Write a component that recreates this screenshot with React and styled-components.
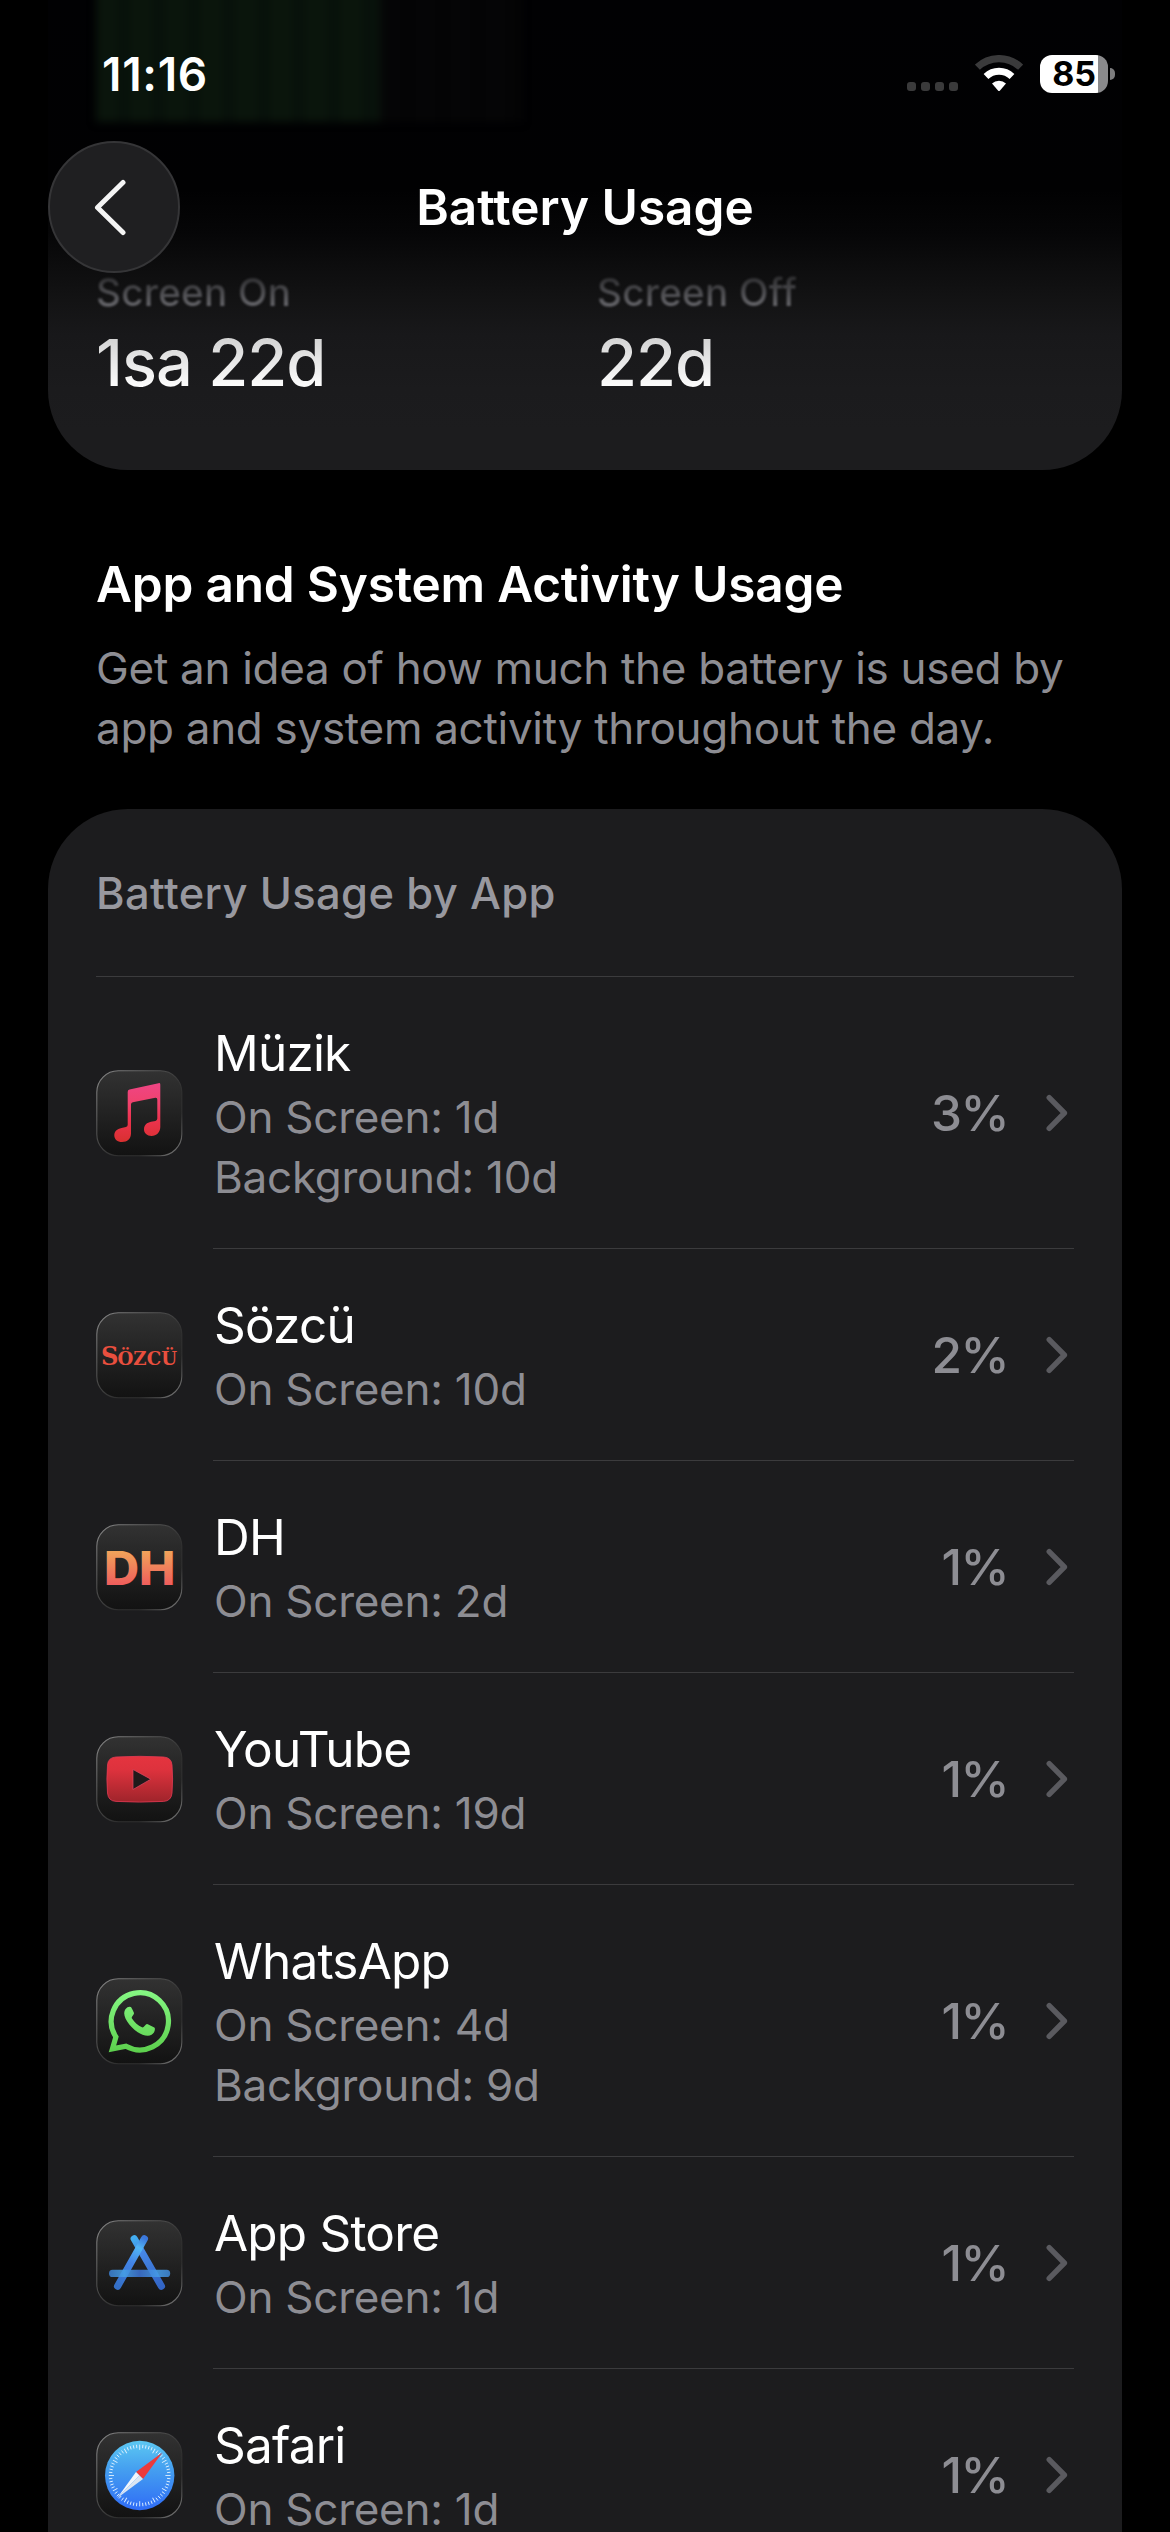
import React from "react";
import styled, { createGlobalStyle } from "styled-components";

const GlobalStyle = createGlobalStyle`
    *{
        box-sizing: border-box;
    }
    body{
        margin: 0;
        background: #000;
        font-family: Inter, "Liberation Sans", sans-serif;
        color: #fff;
    }
    p, h1, h2, h3, ul{
        margin: 0;
        padding: 0;
    }
`;

const Screen = styled.div`
    position: relative;
    width: 1170px;
    height: 2532px;
    overflow: hidden;
    background: #000;
`;

const Header = styled.header`
    position: absolute;
    top: 0;
    left: 0;
    width: 100%;
    z-index: 1;
`;

const StatusBar = styled.div`
    display: flex;
    justify-content: space-between;
    height: 141px;
    padding: 44px 55px 0 102px;
`;

const Time = styled.p`
    font-size: 46px;
    font-weight: 600;
    line-height: 60px;
    letter-spacing: 0.7px;
`;

const StatusIcons = styled.div`
    display: flex;
    align-items: flex-end;
    height: 49px;
`;

const SignalDots = styled.div`
    display: flex;
    gap: 5px;
    margin: 0 17px 2px 0;
    span{
        width: 9px;
        height: 9px;
        border-radius: 3px;
        background: #3a3a3b;
    }
`;

const WifiIcon = styled.svg`
    width: 48px;
    height: 37px;
    margin: 0 17px 1px 0;
`;

const Battery = styled.div`
    display: flex;
    align-items: center;
    gap: 2px;
`;

const BatteryBody = styled.div`
    width: 68px;
    height: 38px;
    border-radius: 12px;
    background: linear-gradient(90deg, #fff ${ props => props.$level }%, #8a8a8c ${ props => props.$level }%);
    color: #000;
    font-size: 34px;
    font-weight: 700;
    line-height: 38px;
    letter-spacing: -0.2px;
    text-align: center;
`;

const BatteryCap = styled.span`
    width: 5px;
    height: 12px;
    border-radius: 0 6px 6px 0;
    background: #7c7c7e;
`;

const NavBar = styled.div`
    display: grid;
    grid-template-columns: 132px 1fr 132px;
    align-items: center;
    height: 132px;
    padding: 0 48px;
`;

const BackButton = styled.button`
    display: flex;
    align-items: center;
    justify-content: center;
    width: 132px;
    height: 132px;
    padding: 0 5px 0 0;
    border: 2px solid #353537;
    border-radius: 50%;
    background: #1f1f21;
`;

const NavTitle = styled.h1`
    font-size: 49.5px;
    font-weight: 600;
    line-height: 60px;
    letter-spacing: 0;
    text-align: center;
`;

const SummaryCard = styled.section`
    display: flex;
    flex-direction: column;
    width: 1074px;
    height: 470px;
    margin: 0 auto;
    border-radius: 0 0 80px 80px;
    background: linear-gradient(#010103 0, #010102 190px, #060607 233px, #0c0c0d 262px, #131314 300px, #18181a 335px, #1b1b1d 390px, #1c1c1e 430px);
`;

const ChartStrip = styled.div`
    display: flex;
    height: 134px;
    margin: -12px 0 0 48px;
    filter: blur(4px);
`;

const ChartBar = styled.div`
    flex: none;
    width: ${ props => props.$width }px;
    background: repeating-linear-gradient(90deg, ${ props => props.$from } 0 20px, ${ props => props.$to } 26px 30px, ${ props => props.$from } 35px);
`;

const Totals = styled.div`
    display: grid;
    grid-template-columns: 501px 1fr;
    padding: 146px 48px 0;
`;

const TotalLabel = styled.p`
    font-size: 38.5px;
    font-weight: 500;
    line-height: 48px;
    letter-spacing: 0.3px;
    background: linear-gradient(#303032 20%, #6c6c71 85%);
    background-clip: text;
    color: transparent;
    filter: blur(1px);
`;

const TotalValue = styled.p`
    margin-top: 9px;
    font-size: 65px;
    font-weight: 500;
    line-height: 76px;
    letter-spacing: -1px;
    background: linear-gradient(#cfcfcf 10%, #fff 85%);
    background-clip: text;
    color: transparent;
    filter: blur(.6px);
`;

const Intro = styled.section`
    height: 339px;
    padding: 84px 96px 0;
`;

const IntroTitle = styled.h2`
    font-size: 49.5px;
    font-weight: 600;
    line-height: 60px;
    letter-spacing: -0.2px;
`;

const IntroText = styled.p`
    margin-top: 24px;
    font-size: 44px;
    line-height: 60px;
    letter-spacing: -0.3px;
    color: #8d8d93;
`;

const UsageCard = styled.section`
    width: 1074px;
    margin: 0 auto;
    padding: 0 48px;
    border-radius: 80px 80px 0 0;
    background: #1c1c1e;
`;

const UsageTitle = styled.h3`
    height: 168px;
    padding-top: 54px;
    border-bottom: 1px solid #3b3b3d;
    font-size: 43.5px;
    font-weight: 500;
    line-height: 60px;
    letter-spacing: 0.35px;
    color: #98989f;
`;

const AppList = styled.ul`
    list-style: none;
`;

const AppRow = styled.li`
    display: flex;
    align-items: center;
    gap: 30px;
`;

const Tile = styled.svg`
    flex: none;
    width: 87px;
    height: 87px;
`;

const RowBody = styled.div`
    display: flex;
    flex: 1;
    align-items: center;
    padding-right: 6px;
    border-bottom: 1px solid #3b3b3d;
`;

const RowText = styled.div`
    flex: 1;
    padding: 45px 0 41px 1px;
`;

const AppName = styled.p`
    margin-bottom: 3px;
    font-size: 49.5px;
    line-height: 62px;
    letter-spacing: -0.8px;
`;

const AppDetail = styled.p`
    font-size: 44px;
    line-height: 60px;
    letter-spacing: -0.25px;
    color: #8d8d93;
`;

const Percent = styled.p`
    margin-right: 38px;
    font-size: 49.5px;
    font-weight: 500;
    line-height: 60px;
    letter-spacing: -1.6px;
    color: #8d8d93;
`;

const Chevron = styled.svg`
    flex: none;
    width: 22px;
    height: 38px;
`;

const MusicGlyph = () => (
    <>
        <defs>
            <linearGradient id="music" x1="0" y1="0" x2="0" y2="1">
                <stop offset="0" stopColor="#ef4585"/>
                <stop offset=".35" stopColor="#f0426c"/>
                <stop offset=".6" stopColor="#ee3350"/>
                <stop offset="1" stopColor="#d93030"/>
            </linearGradient>
        </defs>
        <path
            fill="url(#music)"
            d="M31.7 22Q31.7 20 33.5 19.6L62.5 13.2Q64.3 12.8 64.3 14.5V57C64.3 62 60.5 66 55.5 66C51 66 48 63.2 48 59.3C48 55 51 52.6 55 51.8L59.5 50.9Q61.3 50.5 61.3 48.5V29.5Q61.3 27.3 59.3 27.7L36.8 32.3Q35 32.7 35 34.5V63.5C35 68.5 31.3 72 26 72C21.4 72 18.3 69.3 18.3 65.5C18.3 61.3 21 58.8 25.5 57.9L30 57Q31.7 56.6 31.7 54.7Z"
        />
    </>
);

const SozcuGlyph = () => (
    <text y="53" fill="#e94f3e" fontFamily="DejaVu Serif, serif" fontWeight="700">
        <tspan x="5" fontSize="26.5" textLength="17.5" lengthAdjust="spacingAndGlyphs">S</tspan>
        <tspan x="21.5" fontSize="18" textLength="59.5" lengthAdjust="spacingAndGlyphs">ÖZCÜ</tspan>
    </text>
);

const DhGlyph = () => (
    <>
        <defs>
            <linearGradient id="dh" x1="0" y1="26" x2="0" y2="61" gradientUnits="userSpaceOnUse">
                <stop offset="0" stopColor="#f1a65a"/>
                <stop offset="1" stopColor="#ef5d5c"/>
            </linearGradient>
        </defs>
        <text x="8" y="60.8" fill="url(#dh)" fontSize="46.5" fontWeight="800" fontFamily="Inter, sans-serif" textLength="71.5" lengthAdjust="spacingAndGlyphs">DH</text>
    </>
);

const YoutubeGlyph = () => (
    <>
        <defs>
            <linearGradient id="youtube" x1="0" y1="0" x2="0" y2="1">
                <stop offset="0" stopColor="#e5343f"/>
                <stop offset=".3" stopColor="#dd323d"/>
                <stop offset="1" stopColor="#9f242b"/>
            </linearGradient>
        </defs>
        <path
            fill="url(#youtube)"
            stroke="#e23a54"
            strokeWidth=".8"
            d="M20 21Q43.7 19.6 67.5 21Q75.3 21.4 76 29Q77.2 43 76 57Q75.3 65 67.5 65.4Q43.7 66.8 20 65.4Q12.2 65 11.5 57Q10.3 43 11.5 29Q12.2 21.4 20 21Z"
        />
        <path fill="#201a1b" stroke="#e04a66" strokeWidth=".7" d="M37 33.5L54.8 43.2L37 53.5Z"/>
    </>
);

const WhatsappGlyph = () => (
    <>
        <defs>
            <linearGradient id="whatsapp" x1="0" y1="12" x2="0" y2="75" gradientUnits="userSpaceOnUse">
                <stop offset="0" stopColor="#86f884"/>
                <stop offset="1" stopColor="#5ccf4c"/>
            </linearGradient>
        </defs>
        <path fill="none" stroke="url(#whatsapp)" strokeWidth="5.2" d="M16.4 70.9L19.9 58.9A28.6 28.6 0 1 1 30 68.3Z"/>
        <path
            fill="url(#whatsapp)"
            d="M31.5 29.2Q33 28.4 34.8 28.9Q35.6 29.3 38 35Q38.3 36 36.2 38.6Q35.4 39.5 36 40.5C38.5 44.5 42 47.5 46 49.3Q46.9 49.6 47.6 48.9L50 46.4Q50.8 45.8 51.8 46.3L58.3 49.6Q59 50.2 58.9 51.2C58.6 55.3 55.5 57.6 51.8 57.7C41 57.5 28.2 43.5 28.2 35.3Q28.3 31.3 31.5 29.2Z"
        />
    </>
);

const AppStoreGlyph = () => (
    <g fill="none" strokeWidth="7.2" strokeLinecap="round">
        <defs>
            <linearGradient id="barRight" x1="38" y1="18" x2="65" y2="67" gradientUnits="userSpaceOnUse">
                <stop offset="0" stopColor="#43aef0"/>
                <stop offset=".3" stopColor="#4687e6"/>
                <stop offset="1" stopColor="#3264c4"/>
            </linearGradient>
            <linearGradient id="barLeft" x1="48" y1="18" x2="22" y2="67" gradientUnits="userSpaceOnUse">
                <stop offset="0" stopColor="#3b78dc"/>
                <stop offset=".2" stopColor="#52b6f6"/>
                <stop offset=".5" stopColor="#4384e6"/>
                <stop offset="1" stopColor="#346fc6"/>
            </linearGradient>
            <linearGradient id="barBase" x1="13" y1="0" x2="74" y2="0" gradientUnits="userSpaceOnUse">
                <stop offset="0" stopColor="#3a7ccc"/>
                <stop offset=".25" stopColor="#46a0e6"/>
                <stop offset=".5" stopColor="#3b72d2"/>
                <stop offset=".8" stopColor="#469ce6"/>
                <stop offset="1" stopColor="#3e86d2"/>
            </linearGradient>
        </defs>
        <path stroke="url(#barRight)" d="M38.2 18.8L65.4 66.2"/>
        <path stroke="url(#barLeft)" d="M48.4 18.8L21.6 66.2"/>
        <path stroke="url(#barBase)" strokeOpacity=".88" d="M16.6 53.4H70.6"/>
    </g>
);

const SafariGlyph = () => (
    <>
        <defs>
            <linearGradient id="safari" x1="0" y1="0" x2="0" y2="1">
                <stop offset="0" stopColor="#5cc8f2"/>
                <stop offset=".4" stopColor="#45a0f0"/>
                <stop offset="1" stopColor="#2f6cf6"/>
            </linearGradient>
        </defs>
        <circle cx="43.7" cy="43.5" r="34.7" fill="url(#safari)"/>
        {
            Array.from({ length: 60 }).map( (_ , i) => (
                <path
                    key={ i }
                    stroke="#dff1ff"
                    strokeWidth=".9"
                    d={ i % 5 ? "M43.7 12.6V16" : "M43.7 12.6V17.8" }
                    transform={ `rotate(${ i * 6 } 43.7 43.5)` }
                />
            ))
        }
        <path fill="#ec3a3c" d="M66.4 20.6L47 47L40 40Z"/>
        <path fill="#f1f6fc" d="M21 66.2L40 40L43.5 43.5Z"/>
        <path fill="#dbe6f2" d="M21 66.2L47 47L43.5 43.5Z"/>
    </>
);

const AppIcon = ({ children }) => (
    <Tile viewBox="0 0 87 87">
        <defs>
            <linearGradient id="tile" x1="0" y1="0" x2="0" y2="1">
                <stop offset="0" stopColor="#323232"/>
                <stop offset="1" stopColor="#121212"/>
            </linearGradient>
            <linearGradient id="tileEdge" x1="0" y1="0" x2="1" y2="1">
                <stop offset="0" stopColor="#8a8a8a"/>
                <stop offset=".4" stopColor="#4a4a4a"/>
                <stop offset=".6" stopColor="#303030"/>
                <stop offset=".75" stopColor="#303030"/>
                <stop offset="1" stopColor="#808080"/>
            </linearGradient>
        </defs>
        <rect x=".8" y=".8" width="85" height="85" rx="21.5" fill="url(#tile)" stroke="url(#tileEdge)" strokeWidth="1.1"/>
        { children }
    </Tile>
);

const apps = [
    { name: "Müzik" , details: ["On Screen: 1d" , "Background: 10d"] , percent: "3%" , Glyph: MusicGlyph },
    { name: "Sözcü" , details: ["On Screen: 10d"] , percent: "2%" , Glyph: SozcuGlyph },
    { name: "DH" , details: ["On Screen: 2d"] , percent: "1%" , Glyph: DhGlyph },
    { name: "YouTube" , details: ["On Screen: 19d"] , percent: "1%" , Glyph: YoutubeGlyph },
    { name: "WhatsApp" , details: ["On Screen: 4d" , "Background: 9d"] , percent: "1%" , Glyph: WhatsappGlyph },
    { name: "App Store" , details: ["On Screen: 1d"] , percent: "1%" , Glyph: AppStoreGlyph },
    { name: "Safari" , details: ["On Screen: 1d"] , percent: "1%" , Glyph: SafariGlyph },
];

const AppItem = ({ name , details , percent , Glyph }) => (
    <AppRow>
        <AppIcon><Glyph/></AppIcon>
        <RowBody>
            <RowText>
                <AppName>{ name }</AppName>
                { details.map( detail => <AppDetail key={ detail }>{ detail }</AppDetail> ) }
            </RowText>
            <Percent>{ percent }</Percent>
            <Chevron viewBox="0 0 22 38" fill="none" stroke="#5a5a5f" strokeWidth="5.4" strokeLinecap="round" strokeLinejoin="round">
                <path d="M3.2 3.6L18.4 19L3.2 34.4"/>
            </Chevron>
        </RowBody>
    </AppRow>
);

const TopBar = () => (
    <Header>
        <StatusBar>
            <Time>11:16</Time>
            <StatusIcons>
                <SignalDots><span/><span/><span/><span/></SignalDots>
                <WifiIcon viewBox="0 0 48 37" fill="none">
                    <path stroke="#3a3a3b" strokeWidth="7.2" d="M2.4 12.2A31.4 31.4 0 0 1 45.6 12.2"/>
                    <path stroke="#fff" strokeWidth="6.8" d="M11 21.5A18.7 18.7 0 0 1 37 21.5"/>
                    <path fill="#fff" d="M17 28.5A10 10 0 0 1 31 28.5L25 35.4Q24 36.4 23 35.4Z"/>
                </WifiIcon>
                <Battery>
                    <BatteryBody $level={ 85 }>85</BatteryBody>
                    <BatteryCap/>
                </Battery>
            </StatusIcons>
        </StatusBar>
        <NavBar>
            <BackButton aria-label="Back">
                <svg width="36" height="58" viewBox="0 0 36 58" fill="none" stroke="#f4f4f4" strokeWidth="5" strokeLinecap="round" strokeLinejoin="round">
                    <path d="M29 4.5L3.5 29.5L29 54.5"/>
                </svg>
            </BackButton>
            <NavTitle>Battery Usage</NavTitle>
        </NavBar>
    </Header>
);

export default () => {

    return (

        <Screen>
            <GlobalStyle/>
            <TopBar/>
            <SummaryCard>
                <ChartStrip>
                    <ChartBar $width={ 284 } $from="#0a150c" $to="#07100a"/>
                    <ChartBar $width={ 142 } $from="#050506" $to="#030304"/>
                </ChartStrip>
                <Totals>
                    <div>
                        <TotalLabel>Screen On</TotalLabel>
                        <TotalValue>1sa 22d</TotalValue>
                    </div>
                    <div>
                        <TotalLabel>Screen Off</TotalLabel>
                        <TotalValue>22d</TotalValue>
                    </div>
                </Totals>
            </SummaryCard>
            <Intro>
                <IntroTitle>App and System Activity Usage</IntroTitle>
                <IntroText>Get an idea of how much the battery is used by app and system activity throughout the day.</IntroText>
            </Intro>
            <UsageCard>
                <UsageTitle>Battery Usage by App</UsageTitle>
                <AppList>
                    { apps.map( app => <AppItem key={ app.name } { ...app }/> ) }
                </AppList>
            </UsageCard>
        </Screen>

    )
}
